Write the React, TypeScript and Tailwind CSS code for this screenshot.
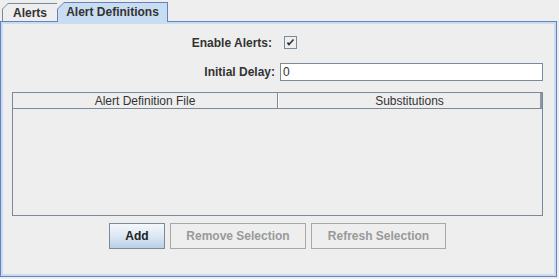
import React from "react";

export default function App() {
  return (
    <div
      className="w-[559px] h-[279px] bg-[#eeeeee] text-[#333333] text-[12px] leading-none"
      style={{ fontFamily: '"Liberation Sans", Arial, sans-serif' }}
    >
      {/* Tab strip */}
      <div className="flex items-end h-[21px] pl-[2px] relative z-10">
        <div className="w-[55px] h-[18px] bg-[#7a8a99] [clip-path:polygon(6px_0,100%_0,100%_100%,0_100%,0_6px)] pl-px pt-px pr-0">
          <div className="w-full h-full bg-[#eeeeee] [clip-path:polygon(5px_0,100%_0,100%_100%,0_100%,0_5px)] flex items-center justify-center font-bold text-[12px] pt-[1px]">
            Alerts
          </div>
        </div>
        <div className="w-[111px] h-[20px] mb-[-1px] bg-[#6382bf] [clip-path:polygon(7px_0,100%_0,100%_100%,0_100%,0_7px)] pl-px pt-px pr-px">
          <div className="w-full h-full bg-[#c8ddf2] [clip-path:polygon(6px_0,100%_0,100%_100%,0_100%,0_6px)] flex items-center justify-center font-bold text-[12px] pb-[1px]">
            Alert Definitions
          </div>
        </div>
      </div>

      {/* Panel */}
      <div className="w-[557px] h-[256px] border border-[#6382bf]">
        <div className="w-full h-full border-2 border-[#c8ddf2] flex flex-col">
          {/* Enable alerts row */}
          <div className="flex items-center h-[19px] mt-[9px]">
            <div className="w-[272px] text-right font-bold pr-[3px]">Enable Alerts:</div>
            <div className="ml-[9px] w-[13px] h-[13px] border border-[#7a8a99] bg-[#eeeeee] flex items-center justify-center">
              <svg width="9" height="9" viewBox="0 0 9 9">
                <path d="M1.5 4.5 L3 6.5 L7.5 1.5" stroke="#333333" strokeWidth="1.6" fill="none" />
                <path d="M2 5 L3 7" stroke="#333333" strokeWidth="1.6" fill="none" />
              </svg>
            </div>
          </div>

          {/* Initial delay row */}
          <div className="flex items-center h-[18px] mt-[11px]">
            <div className="w-[272px] text-right font-bold">Initial Delay:</div>
            <div className="ml-[5px] w-[263px] h-[18px] border border-[#7a8a99] bg-white flex items-center pl-[2px]">
              0
            </div>
          </div>

          {/* Table */}
          <div className="ml-[9px] mt-[11px] w-[531px] h-[124px] border border-[#7a8a99] flex flex-col">
            <div className="flex h-[16px] border-b border-[#7a8a99]">
              <div className="w-[265px] border-r border-[#7a8a99] flex items-center justify-center">
                Alert Definition File
              </div>
              <div className="flex-1 border-l border-white flex items-center justify-center border-r-2 border-r-[#8a99a8]">
                Substitutions
              </div>
            </div>
            <div className="flex-1 bg-[#eeeeee]" />
          </div>

          {/* Buttons */}
          <div className="flex mt-[7px] ml-[106px] gap-[5px] h-[26px]">
            <div className="w-[56px] h-full border border-[#7a8a99] bg-gradient-to-b from-[#f4f8fc] via-[#dde8f3] to-[#b8cfe5] flex items-center justify-center font-bold text-[#222]">
              Add
            </div>
            <div className="w-[136px] h-full border border-[#a8a8a8] flex items-center justify-center font-bold text-[#999999]">
              Remove Selection
            </div>
            <div className="w-[135px] h-full border border-[#a8a8a8] flex items-center justify-center font-bold text-[#999999]">
              Refresh Selection
            </div>
          </div>
        </div>
      </div>
    </div>
  );
}
